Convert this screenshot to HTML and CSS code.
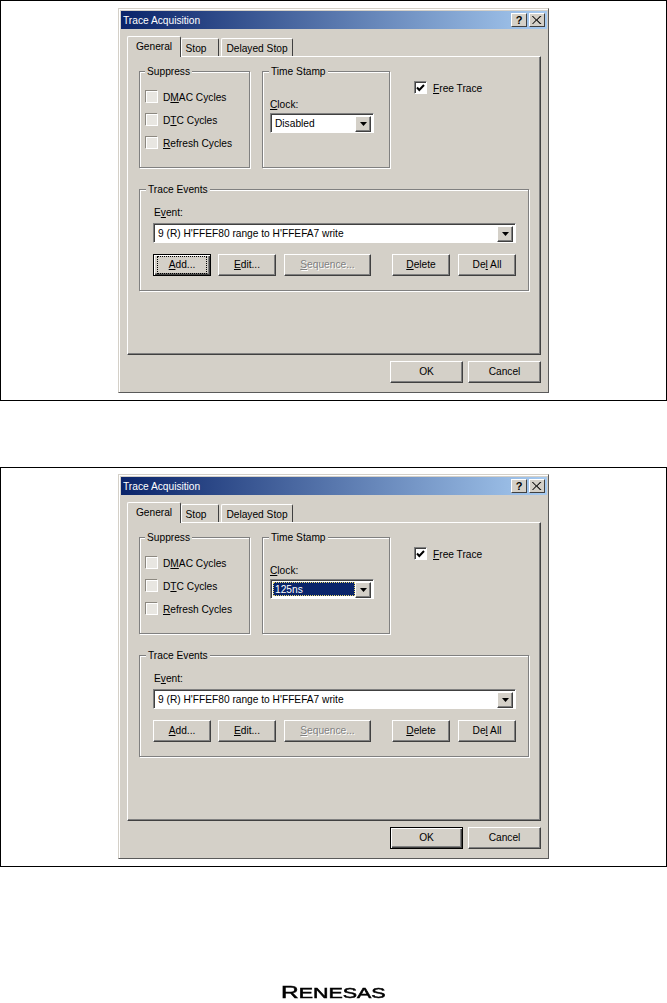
FILE: index.html
```html
<!DOCTYPE html>
<html lang="en">
<head>
<meta charset="utf-8">
<title>Trace Acquisition</title>
<link rel="stylesheet" href="styles.css">
</head>
<body>
<section class="panel">
  <div class="dialog">
    <div class="titlebar">
      <span class="title">Trace Acquisition</span>
      <span class="capbtn capbtn-help">?</span>
      <span class="capbtn"><svg width="10" height="8" viewBox="0 0 10 8"><path d="M1 0l3.5 3.5L8 0h1.5L5.3 4l4.2 4H8L4.5 4.5 1 8H0l3.8-4L-.3 0z" fill="#000"/></svg></span>
    </div>
    <div class="tabs">
      <span class="tab tab-active tab-general">General</span>
      <span class="tab tab-stop">Stop</span>
      <span class="tab tab-delayed">Delayed Stop</span>
    </div>
    <div class="page">
      <div class="top-row">
        <div class="group group-suppress">
          <span class="legend legend-suppress">Suppress</span>
          <label class="check"><i class="box"></i>D<u>M</u>AC Cycles</label>
          <label class="check"><i class="box"></i>D<u>T</u>C Cycles</label>
          <label class="check"><i class="box"></i><u>R</u>efresh Cycles</label>
        </div>
        <div class="group group-stamp">
          <span class="legend">Time Stamp</span>
          <div class="field-label"><u>C</u>lock:</div>
          <div class="combo combo-clock">
            <span class="combo-text">Disabled</span>
            <span class="combo-btn"><svg width="7" height="4" viewBox="0 0 7 4"><path d="M0 0h7L3.5 4z" fill="#000"/></svg></span>
          </div>
        </div>
        <label class="free"><i class="box box-on"><svg width="9" height="8" viewBox="0 0 9 8"><path d="M1 3.5l2.3 2.5L8 1" fill="none" stroke="#000" stroke-width="2"/></svg></i><span><u>F</u>ree Trace</span></label>
      </div>
      <div class="group group-events">
        <span class="legend">Trace Events</span>
        <div class="field-label">E<u>v</u>ent:</div>
        <div class="combo combo-event">
          <span class="combo-text">9 (R) H'FFEF80 range to H'FFEFA7 write</span>
          <span class="combo-btn"><svg width="7" height="4" viewBox="0 0 7 4"><path d="M0 0h7L3.5 4z" fill="#000"/></svg></span>
        </div>
        <div class="btn-row">
          <span class="btn btn-small btn-default"><span class="focus"><u>A</u>dd...</span></span>
          <span class="btn btn-small"><u>E</u>dit...</span>
          <span class="btn btn-seq btn-off"><u>S</u>equence...</span>
          <span class="btn btn-small btn-del"><u>D</u>elete</span>
          <span class="btn btn-small btn-delall"><span>De<u>l</u> All</span></span>
        </div>
      </div>
    </div>
    <div class="footer">
      <span class="btn btn-wide">OK</span>
      <span class="btn btn-wide">Cancel</span>
    </div>
  </div>
</section>
<section class="panel panel-second">
  <div class="dialog">
    <div class="titlebar">
      <span class="title">Trace Acquisition</span>
      <span class="capbtn capbtn-help">?</span>
      <span class="capbtn"><svg width="10" height="8" viewBox="0 0 10 8"><path d="M1 0l3.5 3.5L8 0h1.5L5.3 4l4.2 4H8L4.5 4.5 1 8H0l3.8-4L-.3 0z" fill="#000"/></svg></span>
    </div>
    <div class="tabs">
      <span class="tab tab-active tab-general">General</span>
      <span class="tab tab-stop">Stop</span>
      <span class="tab tab-delayed">Delayed Stop</span>
    </div>
    <div class="page">
      <div class="top-row">
        <div class="group group-suppress">
          <span class="legend legend-suppress">Suppress</span>
          <label class="check"><i class="box"></i>D<u>M</u>AC Cycles</label>
          <label class="check"><i class="box"></i>D<u>T</u>C Cycles</label>
          <label class="check"><i class="box"></i><u>R</u>efresh Cycles</label>
        </div>
        <div class="group group-stamp">
          <span class="legend">Time Stamp</span>
          <div class="field-label"><u>C</u>lock:</div>
          <div class="combo combo-clock">
            <span class="combo-text combo-selected">125ns</span>
            <span class="combo-btn"><svg width="7" height="4" viewBox="0 0 7 4"><path d="M0 0h7L3.5 4z" fill="#000"/></svg></span>
          </div>
        </div>
        <label class="free"><i class="box box-on"><svg width="9" height="8" viewBox="0 0 9 8"><path d="M1 3.5l2.3 2.5L8 1" fill="none" stroke="#000" stroke-width="2"/></svg></i><span><u>F</u>ree Trace</span></label>
      </div>
      <div class="group group-events">
        <span class="legend">Trace Events</span>
        <div class="field-label">E<u>v</u>ent:</div>
        <div class="combo combo-event">
          <span class="combo-text">9 (R) H'FFEF80 range to H'FFEFA7 write</span>
          <span class="combo-btn"><svg width="7" height="4" viewBox="0 0 7 4"><path d="M0 0h7L3.5 4z" fill="#000"/></svg></span>
        </div>
        <div class="btn-row">
          <span class="btn btn-small"><u>A</u>dd...</span>
          <span class="btn btn-small"><u>E</u>dit...</span>
          <span class="btn btn-seq btn-off"><u>S</u>equence...</span>
          <span class="btn btn-small btn-del"><u>D</u>elete</span>
          <span class="btn btn-small btn-delall"><span>De<u>l</u> All</span></span>
        </div>
      </div>
    </div>
    <div class="footer">
      <span class="btn btn-wide btn-default">OK</span>
      <span class="btn btn-wide">Cancel</span>
    </div>
  </div>
</section>
<div class="logo"><span class="logo-text"><span class="logo-r">R</span>ENESAS</span></div>
</body>
</html>
```
FILE: styles.css
```css
* { box-sizing: border-box; }
html, body { margin: 0; padding: 0; background: #fff; }
body {
  width: 667px;
  height: 1003px;
  overflow: hidden;
  font-family: "Liberation Sans", Arial, sans-serif;
  font-size: 10.2px;
  line-height: 13px;
  color: #000;
}
.panel {
  height: 401px;
  border: 1px solid #000;
  padding: 7px 0 0 117px;
}
.panel-second {
  height: 400px;
  margin-top: 66px;
  padding-top: 6px;
}
.dialog {
  width: 431px;
  height: 385px;
  padding: 2px 1px 2px 2px;
  background: #d4d0c8;
  border: 1px solid;
  border-color: #d4d0c8 #5a5a5a #5a5a5a #d4d0c8;
  box-shadow: inset 1px 1px 0 #fff;
}
.titlebar {
  height: 18px;
  display: flex;
  align-items: center;
  padding: 0 2px;
  gap: 2px;
  background: linear-gradient(90deg, #0a246a, #a6caf0);
}
.title { flex: 1; color: #fff; font-size: 10.2px; }
.capbtn {
  width: 16px;
  height: 14px;
  display: flex;
  align-items: center;
  justify-content: center;
  background: #d4d0c8;
  border: 1px solid;
  border-color: #fff #404040 #404040 #fff;
  font-weight: bold;
  font-size: 11px;
}
.tabs {
  height: 20px;
  margin: 7px 0 0 6px;
  display: flex;
  align-items: flex-end;
}
.tab {
  height: 18px;
  padding-top: 1px;
  display: flex;
  align-items: center;
  justify-content: center;
  border: 1px solid;
  border-color: #fff #404040 transparent #fff;
  border-bottom: 0;
  border-radius: 2px 2px 0 0;
}
.tab-active {
  position: relative;
  z-index: 1;
  height: 21px;
  margin-bottom: -1px;
  background: #d4d0c8;
  padding: 0 0 2px;
}
.tab-general { width: 54px; }
.tab-stop { width: 38px; padding-right: 8px; }
.tab-delayed { width: 72px; margin-left: 2px; }
.page {
  width: 414px;
  height: 299px;
  margin-left: 6px;
  padding: 14px 0 0 11px;
  border: 1px solid;
  border-color: #fff #404040 #404040 #fff;
  box-shadow: inset -1px -1px 0 #808080;
}
.top-row { display: flex; gap: 12px; }
.group {
  position: relative;
  border: 1px solid #808080;
  box-shadow: inset 1px 1px 0 #fff, 1px 1px 0 #fff;
}
.legend {
  position: absolute;
  top: -7px;
  left: 6px;
  padding: 0 2px;
  background: #d4d0c8;
}
.legend-suppress { left: 5px; }
.group-suppress {
  width: 111px;
  height: 97px;
  padding: 19px 0 0 6px;
  display: flex;
  flex-direction: column;
  gap: 11px;
}
.group-stamp {
  width: 128px;
  height: 97px;
  padding: 26px 0 0 7px;
}
.check, .free { display: flex; align-items: center; height: 12px; }
.box {
  flex: none;
  width: 12px;
  height: 12px;
  margin-right: 5px;
  background: #e8e6e1;
  border: 1px solid #fff;
  box-shadow: -1px -1px 0 #8c8880;
}
.free { margin: 10px 0 0 12px; height: 13px; }
.box-on {
  width: 13px;
  height: 13px;
  margin-right: 6px;
  background: #fff;
  border-color: #808080 #fff #fff #808080;
  box-shadow: inset 1px 1px 0 #404040;
  display: flex;
  align-items: center;
  justify-content: center;
}
.free span { position: relative; top: 1px; }
.field-label { height: 13px; }
.combo {
  display: flex;
  height: 20px;
  margin-top: 2px;
  padding: 2px;
  background: #fff;
  border: 1px solid;
  border-color: #808080 #fff #fff #808080;
  box-shadow: inset 1px 1px 0 #404040;
}
.combo-clock { width: 104px; }
.combo-event { width: 363px; margin-top: 4px; }
.combo-text { flex: 1; padding: 1px 2px; line-height: 14px; }
.combo-selected {
  background: #0a246a;
  color: #fff;
  outline: 1px dotted #e8d870;
  outline-offset: -1px;
}
.combo-btn {
  flex: none;
  width: 16px;
  height: 16px;
  display: flex;
  align-items: center;
  justify-content: center;
  background: #d4d0c8;
  border: 1px solid;
  border-color: #fff #404040 #404040 #fff;
  box-shadow: inset -1px -1px 0 #808080;
}
.group-events {
  width: 390px;
  height: 102px;
  margin-top: 21px;
  padding: 16px 0 0 13px;
}
.group-events .field-label { position: relative; left: 1px; }
.btn-row { display: flex; gap: 7px; width: 363px; margin-top: 11px; }
.btn {
  display: flex;
  align-items: center;
  justify-content: center;
  height: 22px;
  padding-bottom: 2px;
  background: #d4d0c8;
  border: 1px solid;
  border-color: #fff #404040 #404040 #fff;
  box-shadow: inset -1px -1px 0 #808080;
}
.btn-small { width: 58px; }
.btn-seq { width: 87px; margin-left: 1px; }
.btn-del { margin-left: auto; }
.btn-delall { margin-left: 1px; }
.btn-off { color: #808080; text-shadow: 1px 1px 0 #fff; }
.btn-default {
  border: 1px solid #000;
  box-shadow: inset 1px 1px 0 #fff, inset -1px -1px 0 #404040, inset -2px -2px 0 #808080;
}
.btn-default .focus { margin-top: 2px; }
.focus {
  width: 48px;
  height: 16px;
  padding-bottom: 2px;
  display: flex;
  align-items: center;
  justify-content: center;
  outline: 1px dotted #000;
}
.footer {
  display: flex;
  justify-content: flex-end;
  gap: 5px;
  margin-top: 6px;
  padding-right: 6px;
}
.btn-wide { width: 73px; }
.logo {
  width: 105px;
  margin: 119px 0 0 281px;
  line-height: 14px;
  white-space: nowrap;
}
.logo-text {
  display: inline-block;
  font-size: 14px;
  -webkit-text-stroke: 0.5px #000;
  transform: scaleX(1.53);
  transform-origin: 0 50%;
}
.logo-r { font-size: 16px; }
```
